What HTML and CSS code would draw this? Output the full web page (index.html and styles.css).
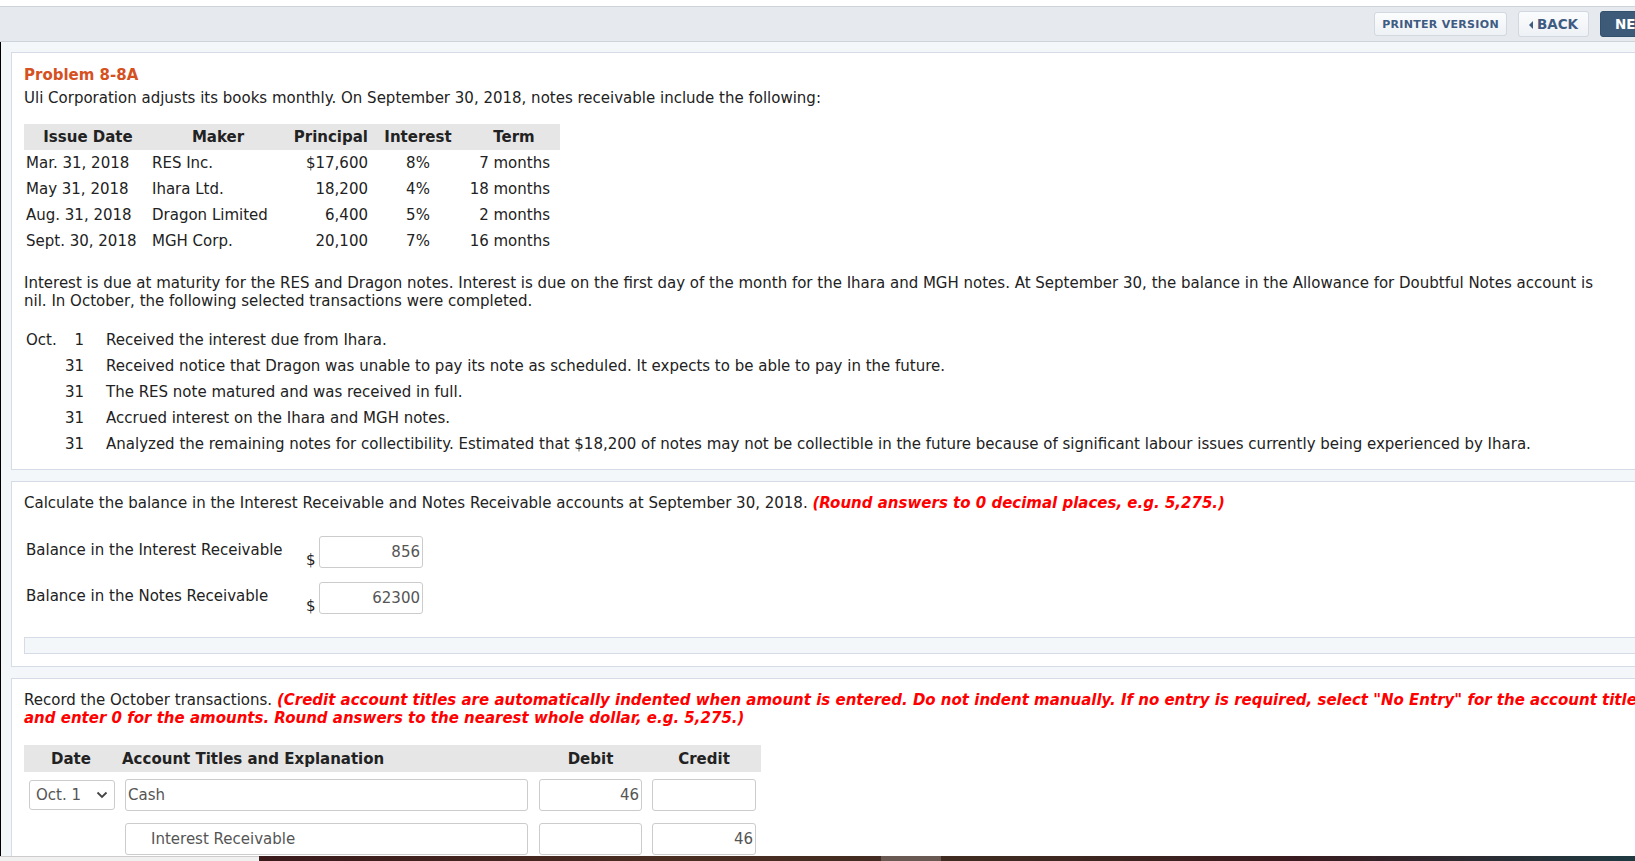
FILE: index.html
```html
<!DOCTYPE html>
<html lang="en">
<head>
    <meta charset="UTF-8">
    <title>Problem 8-8A</title>
    <link rel="stylesheet" href="styles.css">
</head>
<body>
<div class="page">
    <div class="topbar">
        <button class="btn btn-light btn-small">PRINTER VERSION</button>
        <button class="btn btn-light"><span class="caret"></span>BACK</button>
        <button class="btn btn-dark">NEXT</button>
    </div>

    <div class="content">
        <div class="panel">
            <div class="problem-title">Problem 8-8A</div>
            <p class="intro">Uli Corporation adjusts its books monthly. On September 30, 2018, notes receivable include the following:</p>

            <table class="notes">
                <thead>
                    <tr>
                        <th class="c-date">Issue Date</th>
                        <th class="c-maker">Maker</th>
                        <th class="c-prin">Principal</th>
                        <th class="c-int">Interest</th>
                        <th class="c-term">Term</th>
                    </tr>
                </thead>
                <tbody>
                    <tr><td class="c-date">Mar. 31, 2018</td><td>RES Inc.</td><td class="num">$17,600</td><td class="mid">8%</td><td class="num term">7 months</td></tr>
                    <tr><td class="c-date">May 31, 2018</td><td>Ihara Ltd.</td><td class="num">18,200</td><td class="mid">4%</td><td class="num term">18 months</td></tr>
                    <tr><td class="c-date">Aug. 31, 2018</td><td>Dragon Limited</td><td class="num">6,400</td><td class="mid">5%</td><td class="num term">2 months</td></tr>
                    <tr><td class="c-date">Sept. 30, 2018</td><td>MGH Corp.</td><td class="num">20,100</td><td class="mid">7%</td><td class="num term">16 months</td></tr>
                </tbody>
            </table>

            <p class="para">Interest is due at maturity for the RES and Dragon notes. Interest is due on the first day of the month for the Ihara and MGH notes. At September 30, the balance in the Allowance for Doubtful Notes account is<br>nil. In October, the following selected transactions were completed.</p>

            <table class="events">
                <tr><td class="ev-month">Oct.</td><td class="ev-day">1</td><td>Received the interest due from Ihara.</td></tr>
                <tr><td class="ev-month"></td><td class="ev-day">31</td><td>Received notice that Dragon was unable to pay its note as scheduled. It expects to be able to pay in the future.</td></tr>
                <tr><td class="ev-month"></td><td class="ev-day">31</td><td>The RES note matured and was received in full.</td></tr>
                <tr><td class="ev-month"></td><td class="ev-day">31</td><td>Accrued interest on the Ihara and MGH notes.</td></tr>
                <tr><td class="ev-month"></td><td class="ev-day">31</td><td>Analyzed the remaining notes for collectibility. Estimated that $18,200 of notes may not be collectible in the future because of significant labour issues currently being experienced by Ihara.</td></tr>
            </table>
        </div>

        <div class="panel">
            <p class="question">Calculate the balance in the Interest Receivable and Notes Receivable accounts at September 30, 2018. <span class="hint">(Round answers to 0 decimal places, e.g. 5,275.)</span></p>

            <div class="balance-row">
                <span class="balance-label">Balance in the Interest Receivable</span>
                <span class="dollar">$</span>
                <input class="amount" type="text" value="856">
            </div>
            <div class="balance-row">
                <span class="balance-label">Balance in the Notes Receivable</span>
                <span class="dollar">$</span>
                <input class="amount" type="text" value="62300">
            </div>

            <div class="feedback-bar"></div>
        </div>

        <div class="panel">
            <p class="question">Record the October transactions. <span class="hint">(Credit account titles are automatically indented when amount is entered. Do not indent manually. If no entry is required, select "No Entry" for the account titles and enter 0 for the amounts. Round answers to the nearest whole dollar, e.g. 5,275.)</span></p>

            <div class="journal">
                <div class="journal-head">
                    <div class="j-date">Date</div>
                    <div class="j-account">Account Titles and Explanation</div>
                    <div class="j-debit">Debit</div>
                    <div class="j-credit">Credit</div>
                </div>
                <div class="journal-row">
                    <div class="j-date">
                        <div class="select">Oct. 1
                            <svg class="chev" width="12" height="8" viewBox="0 0 12 8"><path d="M1.5 1.5 L6 6 L10.5 1.5" fill="none" stroke="#444" stroke-width="1.8"/></svg>
                        </div>
                    </div>
                    <div class="j-account"><input class="field" type="text" value="Cash"></div>
                    <div class="j-debit"><input class="field right" type="text" value="46"></div>
                    <div class="j-credit"><input class="field right" type="text" value=""></div>
                </div>
                <div class="journal-row">
                    <div class="j-date"></div>
                    <div class="j-account"><input class="field indent" type="text" value="Interest Receivable"></div>
                    <div class="j-debit"><input class="field right" type="text" value=""></div>
                    <div class="j-credit"><input class="field right" type="text" value="46"></div>
                </div>
            </div>
        </div>
    </div>
</div>

<div class="taskbar">
    <div class="taskbar-left"></div>
    <div class="taskbar-apps"><span class="taskbar-hot"></span></div>
</div>
</body>
</html>
```

FILE: styles.css
```css
body {
    margin: 0;
    width: 1635px;
    height: 861px;
    overflow: hidden;
    background: #f4f7fa;
    font-family: "DejaVu Sans", Verdana, sans-serif;
    font-size: 15px;
    color: #222;
}
.page {
    width: 1672px;
    padding-top: 6px;
    background: #fff;
}
.topbar {
    display: flex;
    justify-content: flex-end;
    align-items: center;
    gap: 11px;
    height: 34px;
    background: #e6e9ee;
    border-top: 1px solid #cdd3db;
    border-bottom: 1px solid #cdd3db;
}
.btn {
    font-family: "DejaVu Sans", Verdana, sans-serif;
    font-weight: bold;
    border-radius: 3px;
    cursor: pointer;
}
.btn-light {
    height: 26px;
    padding: 0 10px;
    background: linear-gradient(#fbfcfd, #eef1f5);
    border: 1px solid #d2d8e0;
    color: #3e5b82;
    font-size: 13.5px;
}
.btn-small {
    height: 24px;
    font-size: 11px;
    letter-spacing: 0.3px;
    padding: 0 7px;
}
.caret {
    display: inline-block;
    width: 0;
    height: 0;
    border-top: 4px solid transparent;
    border-bottom: 4px solid transparent;
    border-right: 4px solid #3e5b82;
    margin-right: 4px;
    vertical-align: 0;
}
.btn-dark {
    height: 26px;
    width: 72px;
    background: #3d5a79;
    border: 1px solid #33506e;
    color: #fff;
    font-size: 13.5px;
    text-align: left;
    padding-left: 14px;
}
.content {
    background: #f4f7fa;
    border-left: 1px solid #000;
    padding: 10px 10px 0 10px;
    display: flex;
    flex-direction: column;
    gap: 11px;
    height: 900px;
}
.panel {
    background: #fff;
    border: 1px solid #d5dce5;
    padding: 11px 12px 12px 12px;
}
p {
    margin: 0;
}
.problem-title {
    color: #d5511f;
    font-weight: bold;
    line-height: 22px;
}
.intro {
    line-height: 24px;
    margin-bottom: 14px;
}
.notes {
    border-collapse: collapse;
    width: 536px;
}
.notes th {
    background: #e6e6e6;
    font-weight: bold;
    height: 26px;
    padding: 0;
}
.notes td {
    height: 26px;
    padding: 0;
}
.notes .c-date {
    width: 126px;
    padding-left: 2px;
}
.notes th.c-date {
    padding-left: 0;
}
.notes .c-maker {
    width: 132px;
}
.notes .c-prin {
    width: 84px;
    text-align: right;
}
.notes .c-int {
    width: 100px;
}
.notes .num {
    text-align: right;
}
.notes .mid {
    text-align: center;
}
.notes .term {
    padding-right: 10px;
}
.para {
    line-height: 18px;
    margin: 20px 0 17px 0;
}
.events {
    border-collapse: collapse;
}
.events td {
    height: 26px;
    padding: 0;
    vertical-align: middle;
}
.events .ev-month {
    width: 38px;
    padding-left: 2px;
}
.events .ev-day {
    width: 20px;
    text-align: right;
    padding-right: 22px;
}
.question {
    line-height: 18px;
    margin-top: 1px;
}
.hint {
    color: #f00;
    font-weight: bold;
    font-style: italic;
}
.balance-row {
    display: flex;
    align-items: center;
    margin-top: 23px;
}
.balance-row + .balance-row {
    margin-top: 12px;
}
.balance-label {
    width: 280px;
    padding-left: 2px;
    padding-bottom: 4px;
}
.dollar {
    width: 13px;
    padding-top: 16px;
}
.amount {
    width: 104px;
    height: 32px;
    box-sizing: border-box;
    border: 1px solid #ccc;
    border-radius: 3px;
    text-align: right;
    font-family: "DejaVu Sans", Verdana, sans-serif;
    font-size: 15px;
    color: #555;
    padding: 0 2px;
}
.feedback-bar {
    height: 15px;
    margin-top: 22px;
    margin-right: -13px;
    background: #f4f7fa;
    border: 1px solid #d5dce5;
}
.journal {
    margin-top: 18px;
    width: 737px;
}
.journal-head {
    display: flex;
    height: 27px;
    align-items: center;
    background: #e6e6e6;
    font-weight: bold;
}
.journal-head .j-date, .journal-head .j-debit, .journal-head .j-credit {
    text-align: center;
}
.journal-head .j-account {
    padding-left: 4px;
}
.j-date {
    width: 94px;
    flex: none;
}
.j-account {
    width: 416px;
    flex: none;
    box-sizing: border-box;
}
.j-debit {
    width: 113px;
    flex: none;
}
.j-credit {
    width: 114px;
    flex: none;
}
.journal-row {
    display: flex;
    align-items: center;
    height: 32px;
    margin-top: 7px;
}
.journal-row + .journal-row {
    margin-top: 12px;
}
.journal-row .j-date {
    padding-left: 5px;
    box-sizing: border-box;
}
.journal-row .j-account {
    padding-left: 7px;
    padding-right: 6px;
}
.journal-row .j-debit, .journal-row .j-credit {
    padding-left: 5px;
    padding-right: 5px;
    box-sizing: border-box;
}
.select {
    display: flex;
    align-items: center;
    justify-content: space-between;
    width: 86px;
    height: 30px;
    box-sizing: border-box;
    border: 1px solid #ccc;
    border-radius: 3px;
    padding: 0 6px 0 6px;
    color: #555;
    background: #fff;
}
.field {
    width: 100%;
    height: 32px;
    box-sizing: border-box;
    border: 1px solid #ccc;
    border-radius: 3px;
    font-family: "DejaVu Sans", Verdana, sans-serif;
    font-size: 15px;
    color: #555;
    padding: 0 2px;
}
.field.right {
    text-align: right;
}
.field.indent {
    padding-left: 25px;
}
.taskbar {
    position: fixed;
    left: 0;
    bottom: 0;
    width: 100%;
    height: 5px;
    display: flex;
}
.taskbar-left {
    width: 259px;
    background: #f0f0f0;
    border-top: 1px solid #ccc;
}
.taskbar-apps {
    flex: 1;
    position: relative;
    background: linear-gradient(90deg, #3b1a1c, #4a2e22 30%, #3e2a20 55%, #3a1b1f 75%, #1f3a42 100%);
}
.taskbar-hot {
    position: absolute;
    left: 622px;
    top: 0;
    width: 60px;
    height: 5px;
    background: #6a5852;
}
```
